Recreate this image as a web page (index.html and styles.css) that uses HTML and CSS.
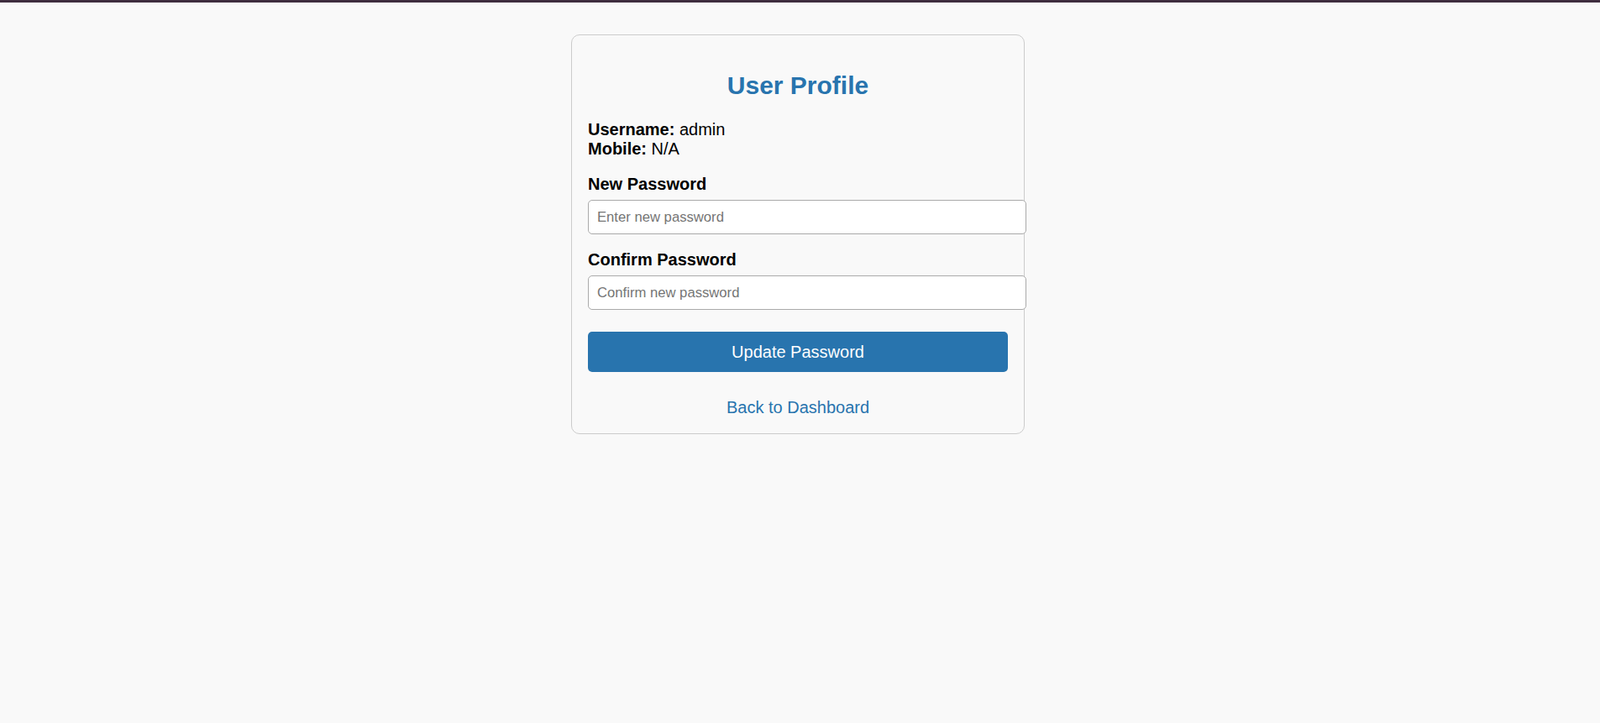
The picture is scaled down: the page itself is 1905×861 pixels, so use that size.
FILE: index.html
```html
<!DOCTYPE html>
<html lang="en">
<head>
<meta charset="utf-8">
<title>User Profile</title>
<link rel="stylesheet" href="styles.css">
</head>
<body>
<div class="topbar"></div>
<main class="page">
  <section class="card">
    <h2 class="title">User Profile</h2>
    <div class="info">
      <div class="info-line"><strong>Username:</strong> admin</div>
      <div class="info-line"><strong>Mobile:</strong> N/A</div>
    </div>
    <form class="form">
      <div class="field">
        <label class="label" for="np">New Password</label>
        <input class="input" id="np" type="password" placeholder="Enter new password">
      </div>
      <div class="field">
        <label class="label" for="cp">Confirm Password</label>
        <input class="input" id="cp" type="password" placeholder="Confirm new password">
      </div>
      <button class="btn" type="button">Update Password</button>
    </form>
    <div class="back"><a class="back-link" href="#">Back to Dashboard</a></div>
  </section>
</main>
</body>
</html>
```
FILE: styles.css
```css
html, body {
  margin: 0;
  padding: 0;
}
body {
  background: #f9f9f9;
  font-family: "Liberation Sans", Arial, sans-serif;
  color: #000;
  min-height: 861px;
}
.topbar {
  height: 3px;
  background: #3f2d3f;
}
.page {
  display: flex;
  justify-content: center;
  padding-top: 38px;
  padding-right: 5px;
}
.card {
  width: 500px;
  padding: 19px;
  border: 1px solid #cccccc;
  border-radius: 10px;
  background: #f9f9f9;
}
.title {
  margin: 24px 0 24px;
  font-size: 30px;
  line-height: 34px;
  font-weight: bold;
  color: #2874ae;
  text-align: center;
}
.info-line {
  font-size: 20px;
  line-height: 23px;
}
.form {
  margin: 0;
}
.field {
  margin-top: 19px;
}
.label {
  display: block;
  font-size: 20px;
  line-height: 23px;
  font-weight: bold;
  margin-bottom: 7px;
}
.input {
  display: block;
  width: 100%;
  box-sizing: content-box;
  margin: 0;
  padding: 10px;
  border: 1px solid #aaaaaa;
  border-radius: 5px;
  background: #ffffff;
  font-family: "Liberation Sans", Arial, sans-serif;
  font-size: 16.67px;
  line-height: 19px;
  height: 19px;
  color: #000;
  outline: none;
}
.input::placeholder {
  color: #757575;
}
.btn {
  display: block;
  width: 100%;
  margin-top: 26px;
  padding: 12.5px 0;
  border: none;
  border-radius: 5px;
  background: #2874ae;
  color: #ffffff;
  font-family: "Liberation Sans", Arial, sans-serif;
  font-size: 20px;
  line-height: 23px;
  cursor: pointer;
}
.back {
  margin-top: 31px;
  text-align: center;
  font-size: 20px;
  line-height: 23px;
}
.back-link {
  color: #2874ae;
  text-decoration: none;
}
```
